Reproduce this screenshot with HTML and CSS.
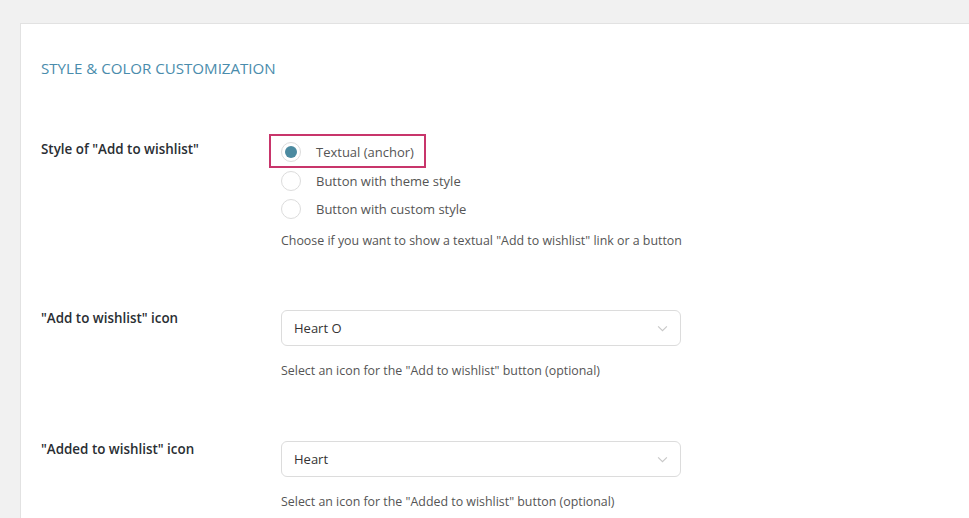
FILE: index.html
```html
<!DOCTYPE html>
<html lang="en">
<head>
  <meta charset="UTF-8">
  <title>Style &amp; Color Customization</title>
  <link rel="stylesheet" href="styles.css">
</head>
<body>
  <div class="panel">
    <h2 class="section-title">Style &amp; Color Customization</h2>

    <div class="row">
      <div class="row-label">Style of "Add to wishlist"</div>
      <div class="row-field">
        <div class="options">
          <label class="option marked">
            <span class="radio checked"></span>
            <span>Textual (anchor)</span>
          </label>
          <label class="option">
            <span class="radio"></span>
            <span>Button with theme style</span>
          </label>
          <label class="option">
            <span class="radio"></span>
            <span>Button with custom style</span>
          </label>
        </div>
        <p class="desc">Choose if you want to show a textual "Add to wishlist" link or a button</p>
      </div>
    </div>

    <div class="row">
      <div class="row-label">"Add to wishlist" icon</div>
      <div class="row-field">
        <div class="select">
          <span>Heart O</span>
          <svg class="chevron" viewBox="0 0 12 8" fill="none"><path d="M1 1.5L6 6.5L11 1.5" stroke="#c8c8c8" stroke-width="1.3"/></svg>
        </div>
        <p class="desc">Select an icon for the "Add to wishlist" button (optional)</p>
      </div>
    </div>

    <div class="row">
      <div class="row-label">"Added to wishlist" icon</div>
      <div class="row-field">
        <div class="select">
          <span>Heart</span>
          <svg class="chevron" viewBox="0 0 12 8" fill="none"><path d="M1 1.5L6 6.5L11 1.5" stroke="#c8c8c8" stroke-width="1.3"/></svg>
        </div>
        <p class="desc">Select an icon for the "Added to wishlist" button (optional)</p>
      </div>
    </div>
  </div>
</body>
</html>
```

FILE: styles.css
```css
:root {
  --fondo: #f1f1f1;
  --borde: #e2e2e2;
  --titulo: #4a8cac;
  --texto: #23282d;
  --texto-suave: #555;
  --marca: #c8356b;
  --radio: #4b8aa0;
}

body {
  margin: 0;
  padding: 23px 0 0 20px;
  background-color: var(--fondo);
  font-family: 'Open Sans', 'Noto Sans', sans-serif;
  font-size: 12.4px;
  color: var(--texto);
  overflow: hidden;
}

.panel {
  background-color: #fff;
  border: 1px solid var(--borde);
  border-right: none;
  padding: 0 20px 40px 20px;
  min-height: 600px;
}

.section-title {
  margin: 0;
  padding: 35px 0 0 0;
  font-size: 15.1px;
  line-height: 18px;
  font-weight: 500;
  text-transform: uppercase;
  color: var(--titulo);
}

.row {
  display: flex;
  margin-top: 64px;
}

.row + .row {
  margin-top: 61px;
}

.row:last-child {
  margin-top: 62px;
}

.row-label {
  width: 240px;
  flex-shrink: 0;
  font-size: 13.4px;
  font-weight: 600;
  line-height: 17px;
  color: #2a2e33;
}

.row-field {
  flex: 1;
}

.options {
  display: flex;
  flex-direction: column;
  align-items: flex-start;
  gap: 8.5px;
  padding-top: 1px;
}

.option {
  position: relative;
  display: inline-flex;
  align-items: center;
  gap: 15px;
  height: 20px;
  font-size: 13px;
  color: var(--texto-suave);
}

.option.marked::after {
  content: "";
  position: absolute;
  top: -8px;
  bottom: -6px;
  left: -12px;
  right: -12px;
  border: 2px solid var(--marca);
}

.radio {
  width: 18px;
  height: 18px;
  border: 1px solid #dcdcdc;
  border-radius: 50%;
  display: flex;
  align-items: center;
  justify-content: center;
}

.radio.checked::before {
  content: "";
  width: 12px;
  height: 12px;
  border-radius: 50%;
  background-color: var(--radio);
}

.desc {
  margin: 13px 0 0 0;
  line-height: 17px;
  color: var(--texto-suave);
}

.select {
  width: 374px;
  height: 34px;
  border: 1px solid #dcdcdc;
  border-radius: 6px;
  padding: 0 12px 0 12px;
  display: flex;
  align-items: center;
  justify-content: space-between;
  font-size: 13px;
  color: #333;
}

.chevron {
  width: 11px;
  height: 7px;
}

.select + .desc {
  margin-top: 16px;
}
```
